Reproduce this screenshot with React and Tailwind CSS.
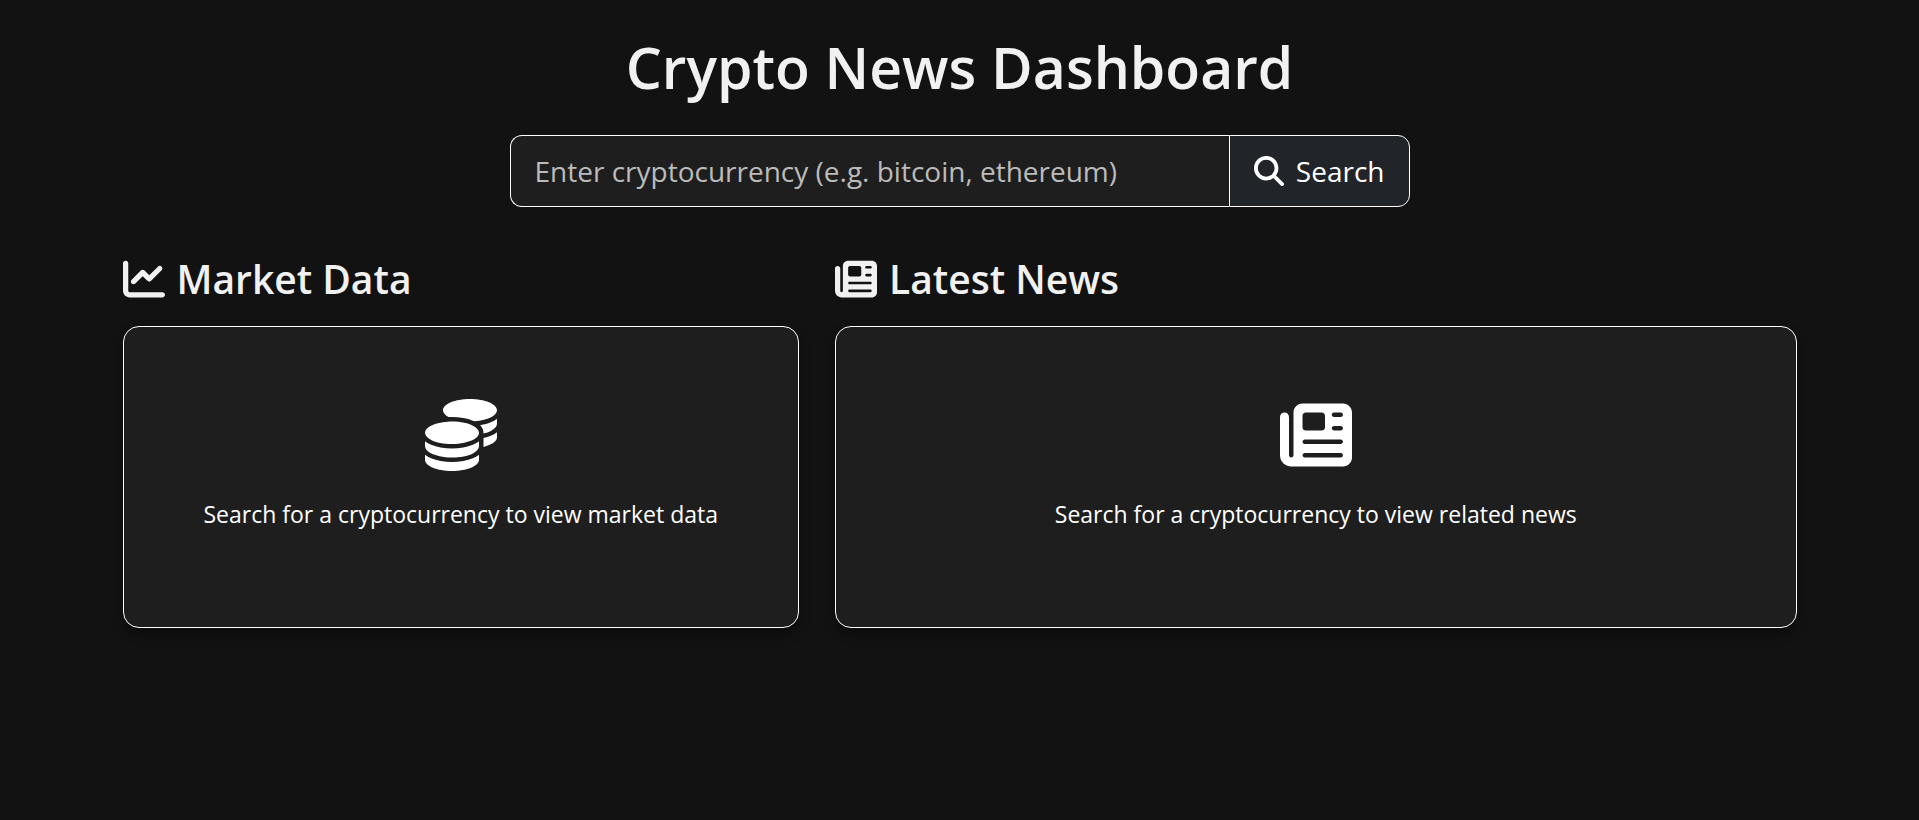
import React from "react";
import { FaChartLine, FaCoins, FaMagnifyingGlass, FaNewspaper } from "react-icons/fa6";

function Panel({ title, HeadingIcon, EmptyIcon, message, width }) {
  return (
    <section className={`px-[18px] ${width}`}>
      <h2 className="mb-[21px] flex items-center gap-3 text-[39px] leading-[52px] font-semibold text-[#f1f1f1]">
        <HeadingIcon aria-hidden="true" className="size-[42px] shrink-0" />
        {title}
      </h2>
      <div className="flex flex-col items-center rounded-2xl border border-white bg-[#1e1e1e] px-6 pt-18 pb-[94px] text-center text-white shadow-[0_6px_12px_rgba(0,0,0,0.4)]">
        <EmptyIcon aria-hidden="true" className="mb-6 size-[72px]" />
        <p className="text-[23px] leading-[38px]">{message}</p>
      </div>
    </section>
  );
}

export default function App() {
  return (
    <div className="min-h-screen bg-[#121212] font-['Open_Sans',sans-serif]">
      <main className="mx-auto max-w-[1710px] pt-8">
        <h1 className="mb-8 text-center text-[57px] leading-[71px] font-semibold text-[#f1f1f1]">
          Crypto News Dashboard
        </h1>
        <form
          role="search"
          onSubmit={(e) => e.preventDefault()}
          className="mx-auto flex max-w-[900px]"
        >
          <input
            type="text"
            aria-label="Cryptocurrency"
            placeholder="Enter cryptocurrency (e.g. bitcoin, ethereum)"
            className="h-[72px] min-w-0 flex-1 rounded-l-xl border border-r-0 border-white bg-[#1e1e1e] px-6 text-[28px] text-white outline-none placeholder:text-[#bbbbbb]"
          />
          <button
            type="submit"
            className="flex items-center gap-3 rounded-r-xl border border-white bg-[#212529] px-6 text-[28px] text-white"
          >
            <FaMagnifyingGlass aria-hidden="true" className="size-[30px]" />
            Search
          </button>
        </form>
        <div className="mt-[46px] flex">
          <Panel
            width="w-5/12"
            title="Market Data"
            HeadingIcon={FaChartLine}
            EmptyIcon={FaCoins}
            message="Search for a cryptocurrency to view market data"
          />
          <Panel
            width="w-7/12"
            title="Latest News"
            HeadingIcon={FaNewspaper}
            EmptyIcon={FaNewspaper}
            message="Search for a cryptocurrency to view related news"
          />
        </div>
      </main>
    </div>
  );
}
